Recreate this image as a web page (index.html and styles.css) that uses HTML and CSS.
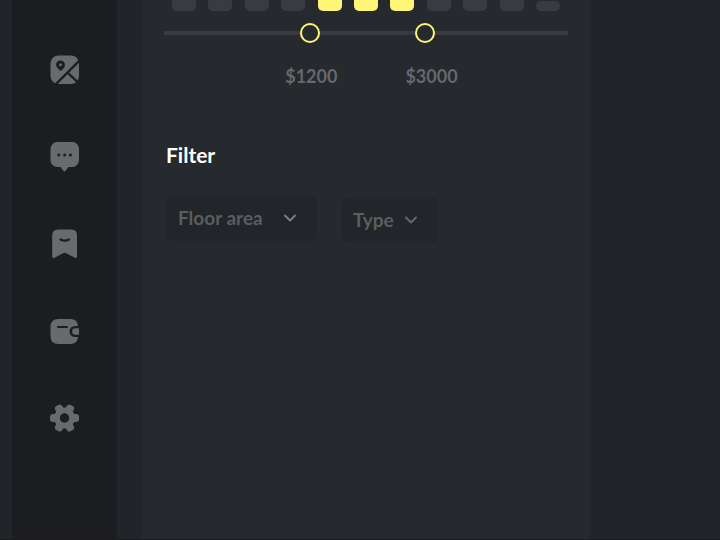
FILE: index.html
```
<!DOCTYPE html>
<html lang="en">
<head>
<meta charset="utf-8">
<meta name="viewport" content="width=device-width, initial-scale=1">
<title>Property search</title>
<link rel="stylesheet" href="styles.css">
</head>
<body>
<div class="app">
  <nav class="sidebar" aria-label="Main">
    <a class="nav-link" href="#map" aria-label="Map">
      <svg class="icon" viewBox="0 0 30 30" aria-hidden="true">
        <rect x="0.500" y="0.500" width="28.500" height="28.500" rx="8" fill="currentColor"/>
        <path d="M30 5 5 30M17.500 17.500 29.500 29" fill="none" class="cut" stroke-width="2.400"/>
        <path d="M10.500 16C7.500 13.300 6 11.500 6 9.800a4.500 4.300 0 0 1 9 0C15 12 13.500 14 10.500 16Z" class="hole"/>
        <circle cx="10.500" cy="9.700" r="1.500" fill="currentColor"/>
      </svg>
    </a>
    <a class="nav-link" href="#messages" aria-label="Messages">
      <svg class="icon" viewBox="0 0 30 30" aria-hidden="true">
        <path d="M7.500 0h14a7 7 0 0 1 7.500 7v11a7 7 0 0 1-7.500 7h-3l-3 4q-1 1-2 0l-3-4h-3a7 7 0 0 1-7-7V7a7 7 0 0 1 7-7Z" fill="currentColor"/>
        <g class="hole"><circle cx="8.800" cy="13" r="1.500"/><circle cx="14.600" cy="13" r="1.500"/><circle cx="20.400" cy="13" r="1.500"/></g>
      </svg>
    </a>
    <a class="nav-link" href="#saved" aria-label="Saved">
      <svg class="icon" viewBox="0 0 30 30" aria-hidden="true">
        <path d="M8 .5h13.500q5.500 0 5.500 6V27q0 3-2.500 1.500L15.700 24q-1-.6-2 0L5 28.500Q2.200 30 2.200 27V6.500q0-6 5.800-6Z" fill="currentColor"/>
        <path d="M10.500 10.500q4.200 2.200 8.400 0" fill="none" class="cut" stroke-width="2.200" stroke-linecap="round"/>
      </svg>
    </a>
    <a class="nav-link" href="#wallet" aria-label="Wallet">
      <svg class="icon" viewBox="0 0 30 30" aria-hidden="true">
        <path d="M8.500 3H20.500q7 0 7.500 7H25a5 5 0 0 0 0 11h3q-.5 7-7.500 7H8.500q-8 0-8-8v-9q0-8 8-8Z" fill="currentColor"/>
        <path d="M29 12.200h-3.500a3.300 3.300 0 0 0 0 6.600H29Z" fill="currentColor"/>
        <path d="M8 11h9" fill="none" class="cut" stroke-width="2" stroke-linecap="round"/>
      </svg>
    </a>
    <a class="nav-link" href="#settings" aria-label="Settings">
      <svg class="icon" viewBox="0 0 30 30" aria-hidden="true">
        <g fill="currentColor">
          <circle cx="14.500" cy="15" r="10.500"/>
          <rect x="10.500" y="0.500" width="8" height="29" rx="3" transform="rotate(30 14.500 15)"/>
          <rect x="10.500" y="0.500" width="8" height="29" rx="3" transform="rotate(90 14.500 15)"/>
          <rect x="10.500" y="0.500" width="8" height="29" rx="3" transform="rotate(150 14.500 15)"/>
        </g>
        <circle cx="14.500" cy="15" r="4.700" class="hole"/>
      </svg>
    </a>
  </nav>
  <main class="panel">
    <section class="price" aria-label="Price range">
      <div class="histogram" aria-hidden="true">
        <span class="bar"></span><span class="bar"></span><span class="bar"></span><span class="bar"></span>
        <span class="bar selected"></span><span class="bar selected"></span><span class="bar selected"></span>
        <span class="bar"></span><span class="bar"></span><span class="bar"></span><span class="bar short"></span>
      </div>
      <div class="range">
        <input class="slider" id="price-min" type="range" min="0" max="1000" value="353" aria-label="Minimum price" aria-valuetext="$1200">
        <input class="slider" id="price-max" type="range" min="0" max="1000" value="654" aria-label="Maximum price" aria-valuetext="$3000">
      </div>
      <div class="prices">
        <output class="amount" for="price-min">$1200</output>
        <output class="amount" for="price-max">$3000</output>
      </div>
    </section>
    <section class="filter">
      <h2 class="title">Filter</h2>
      <div class="choices">
        <div class="choice area">
          <select class="select" aria-label="Floor area"><option>Floor area</option></select>
          <svg class="chevron" viewBox="0 0 14 14" aria-hidden="true"><path d="m2 4.500 5 5 5-5"/></svg>
        </div>
        <div class="choice type">
          <select class="select" aria-label="Type"><option>Type</option></select>
          <svg class="chevron" viewBox="0 0 14 14" aria-hidden="true"><path d="m2 4.500 5 5 5-5"/></svg>
        </div>
      </div>
    </section>
  </main>
</div>
</body>
</html>
```
FILE: styles.css
```
:root {
  --page: #212529;
  --side: #1b1d21;
  --panel: #26292e;
  --muted: #66686b;
  --line: #3a3b40;
  --accent: #fff577;
}

* { box-sizing: border-box; }

body {
  margin: 0;
  background: var(--page);
  color: #fff;
  font-family: Lato, "Liberation Sans", sans-serif;
}

.app {
  display: grid;
  grid-template-columns: 105px minmax(0, 448px);
  column-gap: 25px;
  min-height: 100vh;
  padding-left: 12px;
  border-bottom: 1px solid #1c1b20;
}

.sidebar {
  display: flex;
  flex-direction: column;
  align-items: center;
  justify-content: flex-start;
  gap: 57px;
  padding: 55px 0;
  background: var(--side);
}

.nav-link { color: #696a6b; }

.icon {
  display: block;
  width: 30px;
  height: 30px;
}

.hole { fill: var(--side); }
.cut { stroke: var(--side); }

.panel {
  padding: 0 22px;
  background: var(--panel);
}

.histogram {
  display: flex;
  justify-content: space-between;
  align-items: flex-end;
  height: 11px;
  padding: 0 8px;
}

.bar {
  width: 24px;
  height: 100%;
  border-radius: 0 0 5px 5px;
  background: var(--line);
}

.bar.selected { background: var(--accent); }

.bar.short {
  height: 10px;
  border-radius: 5px;
}

.range {
  display: grid;
  align-items: center;
  height: 20px;
  margin-top: 12px;
  background: linear-gradient(var(--line), var(--line)) center / 100% 4px no-repeat;
}

.slider {
  grid-area: 1 / 1;
  width: 100%;
  height: 20px;
  margin: 0;
  appearance: none;
  background: transparent;
  pointer-events: none;
}

.slider::-webkit-slider-thumb {
  appearance: none;
  width: 20px;
  height: 20px;
  border: 2px solid var(--accent);
  border-radius: 50%;
  background: var(--panel);
  pointer-events: auto;
}

.prices {
  display: flex;
  gap: 68px;
  padding-left: 30%;
  margin-top: 21px;
}

.amount {
  color: var(--muted);
  font-size: 18px;
  font-weight: 700;
  line-height: 24px;
}

.filter {
  margin-top: 53px;
  padding-left: 2px;
}

.title {
  margin: 0;
  font-size: 21px;
  font-weight: 700;
  line-height: 28px;
}

.choices {
  display: flex;
  align-items: flex-end;
  gap: 24px;
  margin-top: 26px;
}

.choice {
  display: grid;
  align-items: center;
  height: 46px;
  border-radius: 8px;
  background: #222529;
}

.area {
  width: 151px;
  margin-bottom: 2px;
}

.type { width: 97px; }

.select {
  grid-area: 1 / 1;
  width: 100%;
  height: 100%;
  padding: 0 12px;
  border: 0;
  appearance: none;
  background: transparent;
  color: #5b5d60;
  font: 700 19px/24px Lato, "Liberation Sans", sans-serif;
}

.chevron {
  grid-area: 1 / 1;
  justify-self: end;
  width: 14px;
  height: 14px;
  margin-right: 20px;
  fill: none;
  stroke: #7a7c7f;
  stroke-width: 2;
  stroke-linecap: round;
  stroke-linejoin: round;
  pointer-events: none;
}

.type .chevron { stroke: #66686b; }
```
